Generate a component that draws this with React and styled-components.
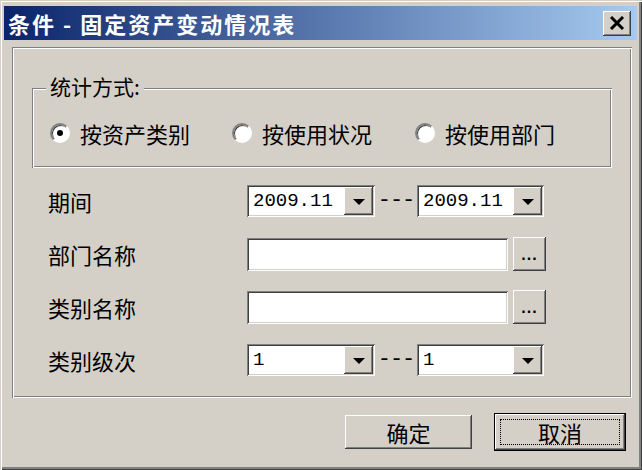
import React from 'react'
import styled, { createGlobalStyle } from 'styled-components'

const GlobalStyle = createGlobalStyle`
  html, body {
    margin: 0;
    padding: 0;
    background: #d4d0c8;
  }
  body {
    font-family: "Noto Sans CJK SC", "Noto Sans", sans-serif;
    color: #000;
  }
`;

const raised = `
  box-shadow: inset -1px -1px #404040, inset 1px 1px #fff,
    inset -2px -2px #808080, inset 2px 2px #d4d0c8;
`;

const sunken = `
  box-shadow: inset 1px 1px #808080, inset -1px -1px #fff,
    inset 2px 2px #404040, inset -2px -2px #d4d0c8;
`;

const etched = `
  box-shadow: inset 1px 1px #808080, inset -1px -1px #fff,
    inset 2px 2px #fff, inset -2px -2px #808080;
`;

const Window = styled.div`
  width: 642px;
  height: 470px;
  box-sizing: border-box;
  padding: 6px 5px 0 4px;
  display: flex;
  flex-direction: column;
  background: #d4d0c8;
  box-shadow: inset 1px 1px #d4d0c8, inset 2px 2px #fff,
    inset -1px -1px #404040, inset -3px -3px #808080;
`;

const TitleBar = styled.div`
  height: 34px;
  flex: none;
  display: flex;
  align-items: center;
  justify-content: space-between;
  padding: 0 6px 0 4px;
  background: linear-gradient(to right, #0a246a, #a6caf0);
`;

const Title = styled.span`
  color: #fff;
  font-size: 22px;
  font-weight: bold;
  line-height: 1;
  letter-spacing: 2px;
`;

const CloseButton = styled.div`
  width: 28px;
  height: 25px;
  display: flex;
  align-items: center;
  justify-content: center;
  background: #d4d0c8;
  ${raised}
`;

const Panel = styled.div`
  margin: 7px 5px 0 8px;
  height: 351px;
  flex: none;
  box-sizing: border-box;
  padding-top: 41px;
  ${etched}
`;

const GroupBox = styled.div`
  position: relative;
  margin: 0 20px;
  height: 80px;
  box-sizing: border-box;
  padding: 34px 0 0 18px;
  ${etched}
`;

const Legend = styled.span`
  position: absolute;
  top: -14px;
  left: 14px;
  padding: 0 4px;
  background: #d4d0c8;
  font-size: 21px;
  line-height: 24px;
`;

const Options = styled.div`
  display: grid;
  grid-template-columns: 182px 183px auto;
  align-items: center;
`;

const Option = styled.label`
  display: flex;
  align-items: center;
  gap: 10px;
  font-size: 22px;
  line-height: 22px;
`;

const Radio = styled.span`
  width: 20px;
  height: 20px;
  box-sizing: border-box;
  border-radius: 50%;
  border: 2px solid;
  border-color: #808080 #fff #fff #808080;
  background: #fff;
  display: flex;
  align-items: center;
  justify-content: center;
  box-shadow: inset 1px 1px #404040;

  &::after {
    content: '';
    width: 6px;
    height: 6px;
    border-radius: 50%;
    background: ${p => (p.$checked ? '#000' : 'transparent')};
  }
`;

const Form = styled.div`
  display: grid;
  grid-template-columns: 199px auto;
  grid-auto-rows: 32px;
  row-gap: 21px;
  align-items: center;
  margin-top: 17px;
  padding-left: 36px;
`;

const Label = styled.span`
  font-size: 22px;
  line-height: 22px;
`;

const Field = styled.div`
  display: flex;
  align-items: center;
`;

const Combo = styled.div`
  width: ${p => p.$width}px;
  height: 32px;
  box-sizing: border-box;
  padding: 2px 2px 2px 6px;
  display: flex;
  align-items: center;
  justify-content: space-between;
  background: #fff;
  ${sunken}
`;

const ComboText = styled.span`
  font-family: "Liberation Mono", "DejaVu Sans Mono", monospace;
  font-size: 19px;
  line-height: 1;
`;

const DropButton = styled.span`
  width: 29px;
  height: 28px;
  display: flex;
  align-items: center;
  justify-content: center;
  background: #d4d0c8;
  ${raised}

  &::after {
    content: '';
    border-left: 6px solid transparent;
    border-right: 6px solid transparent;
    border-top: 6px solid #000;
    margin-top: 1px;
  }
`;

const Dash = styled.span`
  width: 42px;
  text-align: center;
  font-family: "Liberation Mono", monospace;
  font-size: 22px;
  line-height: 1;
  letter-spacing: -1px;
`;

const TextInput = styled.div`
  width: 261px;
  height: 33px;
  box-sizing: border-box;
  background: #fff;
  ${sunken}
`;

const BrowseButton = styled.div`
  width: 33px;
  height: 34px;
  margin-left: 5px;
  display: flex;
  align-items: center;
  justify-content: center;
  background: #d4d0c8;
  font-family: "Liberation Sans", sans-serif;
  font-weight: bold;
  font-size: 16px;
  letter-spacing: 1px;
  padding-top: 2px;
  box-sizing: border-box;
  ${raised}
`;

const Footer = styled.div`
  display: flex;
  justify-content: flex-end;
  align-items: center;
  gap: 22px;
  padding: 15px 11px 0 0;
`;

const Button = styled.div`
  position: relative;
  width: ${p => (p.$default ? 132 : 127)}px;
  height: ${p => (p.$default ? 38 : 34)}px;
  box-sizing: border-box;
  display: flex;
  align-items: center;
  justify-content: center;
  font-size: 22px;
  line-height: 1;
  background: #d4d0c8;
  ${p => p.$default
    ? `border: 1px solid #000;
       box-shadow: inset -1px -1px #404040, inset 1px 1px #fff,
         inset -2px -2px #808080;`
    : raised}
`;

const FocusRing = styled.span`
  position: absolute;
  inset: 5px;
  border: 1px dotted #000;
`;

const ComboBox = ({ value, width = 128 }) => (
  <Combo $width={width}>
    <ComboText>{value}</ComboText>
    <DropButton />
  </Combo>
);

const Range = ({ value }) => (
  <Field>
    <ComboBox value={value} />
    <Dash>---</Dash>
    <ComboBox value={value} width={127} />
  </Field>
);

const Lookup = () => (
  <Field>
    <TextInput />
    <BrowseButton>...</BrowseButton>
  </Field>
);

export default function App() {
  return (
    <>
      <GlobalStyle />
      <Window>
        <TitleBar>
          <Title>条件 - 固定资产变动情况表</Title>
          <CloseButton>
            <svg width="16" height="14" viewBox="0 0 16 14">
              <path d="M2 1 L14 13 M14 1 L2 13" stroke="#000" strokeWidth="3" />
            </svg>
          </CloseButton>
        </TitleBar>

        <Panel>
          <GroupBox>
            <Legend>统计方式:</Legend>
            <Options>
              <Option><Radio $checked />按资产类别</Option>
              <Option><Radio />按使用状况</Option>
              <Option><Radio />按使用部门</Option>
            </Options>
          </GroupBox>

          <Form>
            <Label>期间</Label>
            <Range value="2009.11" />
            <Label>部门名称</Label>
            <Lookup />
            <Label>类别名称</Label>
            <Lookup />
            <Label>类别级次</Label>
            <Range value="1" />
          </Form>
        </Panel>

        <Footer>
          <Button>确定</Button>
          <Button $default>
            取消
            <FocusRing />
          </Button>
        </Footer>
      </Window>
    </>
  )
}
